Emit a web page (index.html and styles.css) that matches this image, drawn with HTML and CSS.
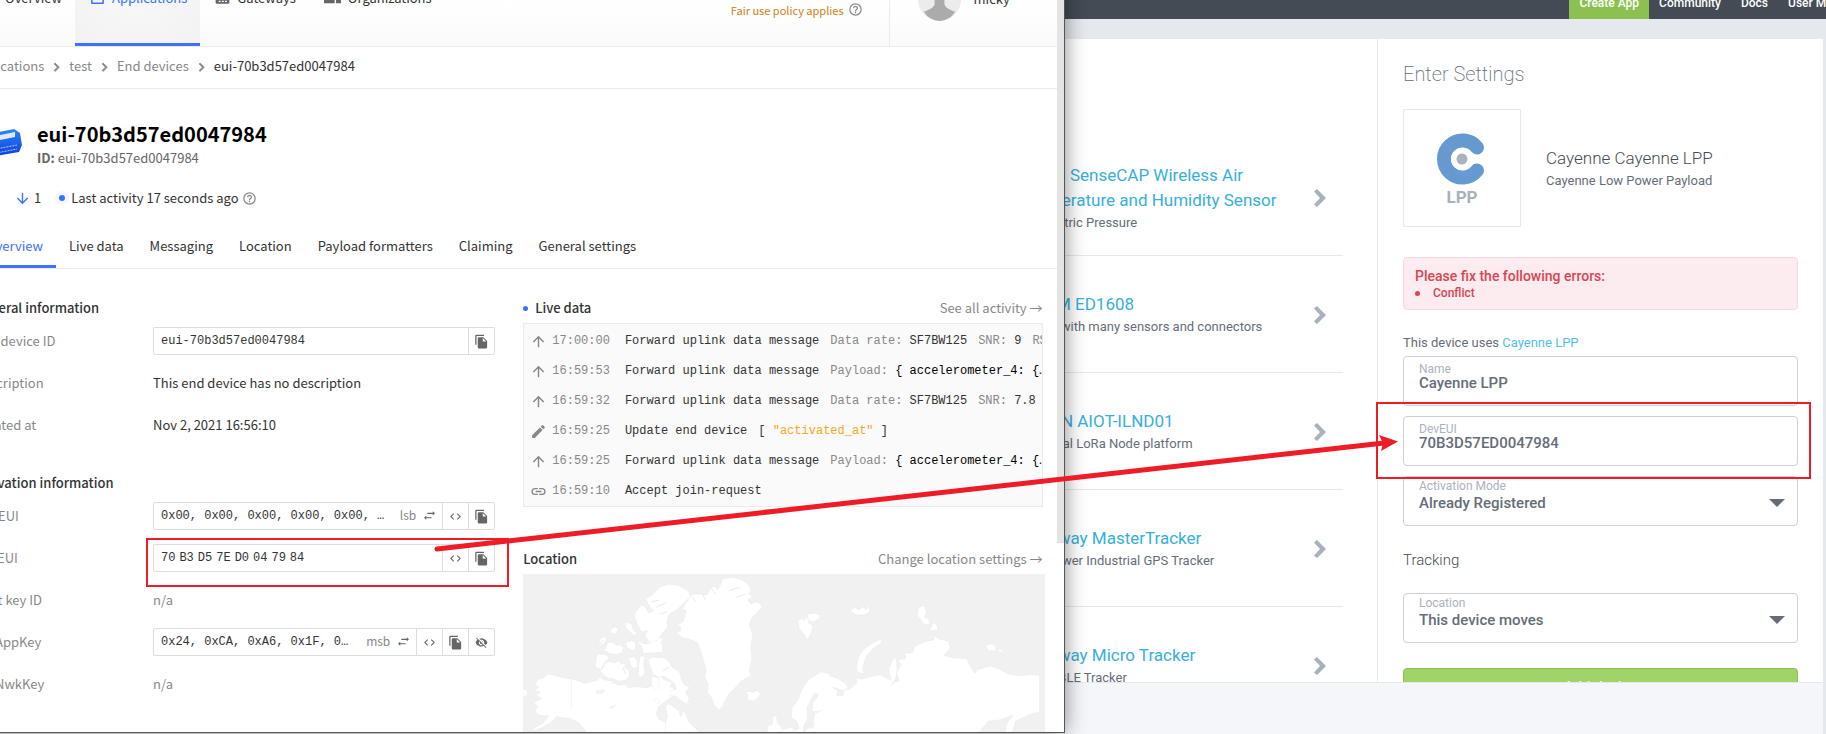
FILE: index.html
```html
<!DOCTYPE html>
<html lang="en">
<head>
<meta charset="utf-8">
<title>End device and Cayenne settings</title>
<link rel="stylesheet" href="styles.css">
</head>
<body>
<svg class="defs" aria-hidden="true">
  <symbol id="i-copy" viewBox="0 0 24 24"><path d="M16 1H4a2 2 0 0 0-2 2v14h2V3h12zM15 5l6 6v10a2 2 0 0 1-2 2H8a2 2 0 0 1-2-2V7c0-1.100.9-2 2-2zm-1 7h5.500L14 6.500z"/></symbol>
  <symbol id="i-code" viewBox="0 0 24 24"><path d="M9.400 16.600 4.800 12l4.600-4.600L8 6l-6 6 6 6zm5.200 0 4.600-4.600-4.600-4.600L16 6l6 6-6 6z"/></symbol>
  <symbol id="i-swap" viewBox="0 0 24 24"><path d="M22 8l-4-4v3H8v2h10v3zM2 16l4 4v-3h10v-2H6v-3z"/></symbol>
  <symbol id="i-up" viewBox="0 0 24 24"><path d="M4 12l1.400 1.400L11 7.800V20h2V7.800l5.600 5.600L20 12l-8-8z"/></symbol>
  <symbol id="i-down" viewBox="0 0 24 24"><path d="M20 12l-1.400-1.400L13 16.200V4h-2v12.200l-5.600-5.600L4 12l8 8z"/></symbol>
  <symbol id="i-edit" viewBox="0 0 24 24"><path d="M3 17.250V21h3.750L17.800 9.940l-3.750-3.750zM20.700 7.040a1 1 0 0 0 0-1.410l-2.340-2.340a1 1 0 0 0-1.410 0l-1.830 1.830 3.750 3.750z"/></symbol>
  <symbol id="i-link" viewBox="0 0 24 24"><path d="M3.900 12A3.100 3.100 0 0 1 7 8.900h4V7H7a5 5 0 0 0 0 10h4v-1.900H7A3.100 3.100 0 0 1 3.900 12zM8 13h8v-2H8zm9-6h-4v1.900h4a3.100 3.100 0 0 1 0 6.200h-4V17h4a5 5 0 0 0 0-10z"/></symbol>
  <symbol id="i-help" viewBox="0 0 24 24"><path d="M11 18h2v-2h-2zm1-16a10 10 0 1 0 0 20 10 10 0 0 0 0-20zm0 18a8 8 0 1 1 0-16 8 8 0 0 1 0 16zm0-14a4 4 0 0 0-4 4h2a2 2 0 1 1 4 0c0 2-3 1.750-3 5h2c0-2.250 3-2.500 3-5a4 4 0 0 0-4-4z"/></symbol>
  <symbol id="i-hide" viewBox="0 0 24 24"><path d="M12 7a5 5 0 0 1 4.640 6.830l2.920 2.920A11.800 11.800 0 0 0 22.990 12 11.830 11.830 0 0 0 8.010 4.950l2.160 2.160C10.740 7.130 11.350 7 12 7zM2 4.270l2.740 2.740A11.800 11.800 0 0 0 1 12a11.830 11.830 0 0 0 15.380 6.660L19.730 22 21 20.730 3.270 3zM7.530 9.800l1.550 1.550a3 3 0 0 0 3.570 3.570l1.550 1.550A5 5 0 0 1 7.530 9.800zm4.310-.78 3.150 3.150.02-.16a3 3 0 0 0-3-3z"/></symbol>
  <symbol id="i-chev" viewBox="0 0 24 24"><path d="M10 7 8.600 8.400l4.600 4.600-4.600 4.600L10 19l6-6z" stroke="currentColor"/></symbol>
  <symbol id="i-apps" viewBox="0 0 24 24"><path d="M3 3h18v18H3zM3 7h18" fill="none" stroke="currentColor" stroke-width="2.400" stroke-linejoin="round"/></symbol>
  <symbol id="i-gate" viewBox="0 0 24 24"><path fill-rule="evenodd" d="M3 2h18a2 2 0 0 1 2 2v16a2 2 0 0 1-2 2H3a2 2 0 0 1-2-2V4c0-1.100.9-2 2-2zm3 11v2h3v-2zm5 0v2h3v-2zm5 0v2h3v-2zM6 17v2h3v-2zm5 0v2h3v-2zm5 0v2h3v-2z"/></symbol>
  <symbol id="i-org" viewBox="0 0 24 24"><path d="M16 11a3 3 0 1 0 0-6 3 3 0 0 0 0 6zm-8 0a3 3 0 1 0 0-6 3 3 0 0 0 0 6zm0 2c-2.330 0-8 1.170-8 3.500V20h15v-3.500C15 14.170 10.330 13 8 13zm8 0-1 .05c1.160.84 2 1.970 2 3.450V20h7v-3.500C24 14.170 18.330 13 16 13z"/></symbol>
  <symbol id="i-next" viewBox="0 0 12 18"><path d="M3 0 12 9 3 18 0 15.500 6 9 0 2.500z"/></symbol>
</svg>

<main class="desktop">
  <section class="cayenne">
    <nav class="topbar">
      <a class="topbar-link create" href="#">Create App</a>
      <a class="topbar-link" href="#">Community</a>
      <a class="topbar-link" href="#">Docs</a>
      <a class="topbar-link" href="#">User Menu</a>
    </nav>
    <div class="sheet">
      <ul class="devices">
        <li class="device"><div><a class="device-name" href="#">Seeed SenseCAP Wireless Air<br>Temperature and Humidity Sensor</a><p class="device-note">Barometric Pressure</p></div><svg class="next"><use href="#i-next"/></svg></li>
        <li class="device"><div><a class="device-name" href="#">MCAM ED1608</a><p class="device-note">Device with many sensors and connectors</p></div><svg class="next"><use href="#i-next"/></svg></li>
        <li class="device"><div><a class="device-name" href="#">ASCEN AIOT-ILND01</a><p class="device-note">Industrial LoRa Node platform</p></div><svg class="next"><use href="#i-next"/></svg></li>
        <li class="device"><div><a class="device-name" href="#">Abeeway MasterTracker</a><p class="device-note">Low Power Industrial GPS Tracker</p></div><svg class="next"><use href="#i-next"/></svg></li>
        <li class="device"><div><a class="device-name" href="#">Abeeway Micro Tracker</a><p class="device-note">GPS &amp; BLE Tracker</p></div><svg class="next"><use href="#i-next"/></svg></li>
      </ul>
      <form class="settings">
        <h2 class="settings-title">Enter Settings</h2>
        <div class="product">
          <div class="product-logo">
            <svg class="lpp-mark" viewBox="0 0 52 52"><path d="M41 14.500A18.500 18.500 0 1 0 41 37.500" fill="none" stroke="#6699d0" stroke-width="14" stroke-linecap="round"/><circle cx="26" cy="26" r="11" fill="#fff"/><circle cx="26" cy="26" r="5.500" fill="#a9b1bd"/></svg>
            <span class="lpp-text">LPP</span>
          </div>
          <div>
            <h3 class="product-name">Cayenne Cayenne LPP</h3>
            <p class="product-note">Cayenne Low Power Payload</p>
          </div>
        </div>
        <div class="alert" role="alert">
          <strong class="alert-title">Please fix the following errors:</strong>
          <ul class="alert-list"><li class="alert-item">Conflict</li></ul>
        </div>
        <p class="uses">This device uses <a class="uses-link" href="#">Cayenne LPP</a></p>
        <div class="field"><label class="field-label" for="name">Name</label><input class="field-input" id="name" value="Cayenne LPP"></div>
        <div class="field"><label class="field-label" for="deveui">DevEUI</label><input class="field-input" id="deveui" value="70B3D57ED0047984"></div>
        <div class="field pick"><label class="field-label" for="mode">Activation Mode</label><select class="field-input" id="mode"><option>Already Registered</option></select></div>
        <h3 class="tracking">Tracking</h3>
        <div class="field pick"><label class="field-label" for="loc">Location</label><select class="field-input" id="loc"><option>This device moves</option></select></div>
        <button class="submit" type="button">Add device</button>
      </form>
    </div>
    <div class="base"></div>
  </section>

  <section class="console">
    <header class="head">
      <nav class="head-nav">
        <a class="head-link" href="#"><svg class="ic15"><use href="#i-apps"/></svg>Overview</a>
        <a class="head-link active" href="#"><svg class="ic15"><use href="#i-apps"/></svg>Applications</a>
        <a class="head-link" href="#"><svg class="ic15"><use href="#i-gate"/></svg>Gateways</a>
        <a class="head-link" href="#"><svg class="ic17"><use href="#i-org"/></svg>Organizations</a>
      </nav>
      <a class="fair" href="#">Fair use policy applies<svg class="ic15 grey"><use href="#i-help"/></svg></a>
      <button class="user" type="button">
        <svg class="avatar" viewBox="0 0 44 44"><circle cx="22" cy="22" r="22" fill="#ececec"/><path d="M17 18h10v8c0 4 5 6 11 8.500A20 20 0 0 1 22 44 20 20 0 0 1 6 34.500C12 32 17 30 17 26z" fill="#ababab"/></svg>
        <span>micky</span>
      </button>
    </header>
    <nav class="crumbs">
      <a href="#">Applications</a><svg class="ic17"><use href="#i-chev"/></svg><a href="#">test</a><svg class="ic17"><use href="#i-chev"/></svg><a href="#">End devices</a><svg class="ic17"><use href="#i-chev"/></svg><span class="here">eui-70b3d57ed0047984</span>
    </nav>
    <div class="title">
      <svg class="node-icon" viewBox="0 0 48 30"><defs><linearGradient id="node" x1="0" y1="0" x2="0" y2="1"><stop offset="0" stop-color="#2f86f5"/><stop offset="1" stop-color="#0a36dc"/></linearGradient></defs><path d="M0 9 40 1l6 4 2 12-3 7L4 31l-4-4z" fill="url(#node)"/><path d="M6 11l35-7v5L6 16z" fill="#d9ebff"/><path d="M6 24l37-7M7 28l36-7" stroke="#b5ccff" fill="none" stroke-dasharray="2 1"/></svg>
      <div>
        <h1 class="title-name">eui-70b3d57ed0047984</h1>
        <p class="title-id"><b>ID:</b> eui-70b3d57ed0047984</p>
      </div>
    </div>
    <div class="activity">
      <svg class="ic17 blue"><use href="#i-down"/></svg><span class="count">1</span><i class="pulse"></i><span>Last activity 17 seconds ago</span><svg class="ic15 grey"><use href="#i-help"/></svg>
    </div>
    <nav class="tabs">
      <a class="tab active" href="#">Overview</a><a class="tab" href="#">Live data</a><a class="tab" href="#">Messaging</a><a class="tab" href="#">Location</a><a class="tab" href="#">Payload formatters</a><a class="tab" href="#">Claiming</a><a class="tab" href="#">General settings</a>
    </nav>
    <div class="columns">
      <div class="info">
        <h2 class="section-title">General information</h2>
        <dl class="rows">
          <dt>End device ID</dt><dd><div class="box"><span class="box-text">eui-70b3d57ed0047984</span><button class="box-btn" type="button" aria-label="Copy"><svg class="ic15"><use href="#i-copy"/></svg></button></div></dd>
          <dt>Description</dt><dd>This end device has no description</dd>
          <dt>Created at</dt><dd>Nov 2, 2021 16:56:10</dd>
        </dl>
        <h2 class="section-title">Activation information</h2>
        <dl class="rows">
          <dt>AppEUI</dt><dd><div class="box"><span class="box-text">0x00, 0x00, 0x00, 0x00, 0x00, …</span><button class="order" type="button">lsb<svg class="ic13"><use href="#i-swap"/></svg></button><button class="box-btn" type="button" aria-label="Format"><svg class="ic13"><use href="#i-code"/></svg></button><button class="box-btn" type="button" aria-label="Copy"><svg class="ic15"><use href="#i-copy"/></svg></button></div></dd>
          <dt>DevEUI</dt><dd><div class="box"><span class="box-text bytes"><span>70</span><span>B3</span><span>D5</span><span>7E</span><span>D0</span><span>04</span><span>79</span><span>84</span></span><button class="box-btn" type="button" aria-label="Format"><svg class="ic13"><use href="#i-code"/></svg></button><button class="box-btn" type="button" aria-label="Copy"><svg class="ic15"><use href="#i-copy"/></svg></button></div></dd>
          <dt>Root key ID</dt><dd class="na">n/a</dd>
          <dt class="sub">AppKey</dt><dd><div class="box"><span class="box-text">0x24, 0xCA, 0xA6, 0x1F, 0…</span><button class="order" type="button">msb<svg class="ic13"><use href="#i-swap"/></svg></button><button class="box-btn" type="button" aria-label="Format"><svg class="ic13"><use href="#i-code"/></svg></button><button class="box-btn" type="button" aria-label="Copy"><svg class="ic15"><use href="#i-copy"/></svg></button><button class="box-btn" type="button" aria-label="Hide"><svg class="ic13"><use href="#i-hide"/></svg></button></div></dd>
          <dt class="sub">NwkKey</dt><dd class="na">n/a</dd>
        </dl>
      </div>
      <div class="side">
        <div class="side-head"><h2 class="side-title"><i class="dot"></i>Live data</h2><a href="#">See all activity →</a></div>
        <ol class="events">
          <li class="event"><svg class="ic17"><use href="#i-up"/></svg><time>17:00:00</time><span class="what">Forward uplink data message</span><span class="data"><s>Data rate:</s> SF7BW125</span><span class="data"><s>SNR:</s> 9</span><span class="data rest"><s>RSSI:</s></span></li>
          <li class="event"><svg class="ic17"><use href="#i-up"/></svg><time>16:59:53</time><span class="what">Forward uplink data message</span><span class="data rest"><s>Payload:</s> <b>{ accelerometer_4: {…</b></span></li>
          <li class="event"><svg class="ic17"><use href="#i-up"/></svg><time>16:59:32</time><span class="what">Forward uplink data message</span><span class="data"><s>Data rate:</s> SF7BW125</span><span class="data"><s>SNR:</s> 7.8</span></li>
          <li class="event"><svg class="ic17"><use href="#i-edit"/></svg><time>16:59:25</time><span class="what">Update end device</span><span class="data">[ <em>"activated_at"</em> ]</span></li>
          <li class="event"><svg class="ic17"><use href="#i-up"/></svg><time>16:59:25</time><span class="what">Forward uplink data message</span><span class="data rest"><s>Payload:</s> <b>{ accelerometer_4: {…</b></span></li>
          <li class="event"><svg class="ic17"><use href="#i-link"/></svg><time>16:59:10</time><span class="what">Accept join-request</span></li>
        </ol>
        <div class="side-head"><h2 class="side-title">Location</h2><a href="#">Change location settings →</a></div>
        <svg class="map" viewBox="0 0 1566 474">
          <g fill="#fff" stroke="#e9e9e9" stroke-width="1.500" stroke-linejoin="round">
            <path d="M0 345l12 3 2 12-8 10-6-2zM20 470l40-22 18-22-28-2-14-12 8-14-12-12 24-12-18-12 16-6-22-8 16-8-12-10 10-14 16-4 12-12 20 4 20 6 36 6 20 6 14 8 18-6 20-4 8-10 14 8 28 4 14 12 20-2 10 10 26-4 30 4 22-8 8-22 6-22 8 4 2 20 12 6 18 4-6 14 12 6-2 20-14 12-12 8-18 14-8 22 8 16 22 10 26 12 12 18v14H196l-8-18-18-24-28-14-24-2-16-4-24 22-34 18z"/>
            <path d="M428 480V446l6-20-6-28 10-8 16 10 14 10 6 18 10-20 8 22 8 16 14 14 14 14v6zM392 378l10-6 12 12-10 6z"/>
            <path d="M222 240l26 2 12 10-14 12-12 24-18-10 4-22zM262 262l14 6 10-8 8 10 14-2-2 14 14 8-2 20-12 10-20 2-16-8-18-2-12-12-10-12 12-6 2-14zM316 252l16-4 10 10 2 22-14 4-8-14zM352 246l16 2-6 16 4 34-12 14-8-10 2-30z"/>
            <path d="M376 260l14-12 16 4 16-2 16 12 12 20 20 12 6 22 8 16 18 8-14 14 12 20-8 18-18-12-14-12-16-4-4-12 20-6-4-16-18-14-12-8-20 2-16-10-6-20z"/>
            <path d="M386 308l20 4 4 26-12 10-12-14zM230 196l14-8 8 6-10 18-14 2zM254 206l14-2 12 10 10-2 12 8-4 16-18 6-18-2-20-12 8-6zM262 166l16-8 8 8-10 16-10-6zM306 144l20 6 6 18 12 12-14 4-12-14-10-8zM308 206l18-6 12 4v22l-10 4-16-10zM350 202l14 8 18-2-14-6 20-8-12-10 20 2 26 8-8 14 6 8-2 20-56 2-6-22-12-8z"/>
            <path d="M356 92l12 8 10 18 14-8-12-12-12-24 20-10 22-24 28-10 34 6 28 18 2 16-16 14-22 22-26 16-6 22 4 14-18 20-14 22-24 4-14-18 8-16-18 4-16-30-6-24z"/>
            <path d="M452 166l12-12 18-12 8-32-12-4 26-44 22-2 26 4 12-24 14-2 6 10 10-18 6-16 28-4 26 6 22 14 10 18-8 12 12 8-14 10 8 12 18-6 18 12-20 24-12 10-8 22 10 30-6 36 4 40-8 28 4 20-30 16-20 24-14 12-12 20-10 24-10 6-14-14-6-20-14-18 2-24-10-22 4-20-12-46-14-38-24-10-20-4-20-16 14-6-2-12-16-2z"/>
            <path d="M670 356l10-4 10 4 12-6 12 8-6 14-18 10-18-6 4-10zM752 424l10 4 2 18 14 16 8 14h-54l4-20 12-4z"/>
            <path d="M826 140l12-8 6 8 6-12 10 8-2 12 12 6-2 20-14 24-14-22-10-12zM856 120l22-2 16 6-4 12-22 8-14-8zM982 110l16-10 10 8 14-10 8 10 14-16-4 24-20 8-22-2z"/>
            <path d="M1008 248l16-22 26-18 24-12 6 8-24 16-22 24-10 24-4 20 6 12-20-4-4-16zM1188 102l16-8 8 18-6 16 14 10 2 14-20-2-8-16-10-8zM1234 144l12 14-2 10-24 4 6-12zM1390 214l18-4 14 8-4 14-20-2zM1430 224l14 6-4 6-12-4zM1402 254l14 6-10 2z"/>
            <path d="M784 480l4-10 20-10 10 12 12-8-8-22-16-12 2-28 18-24 12-32 20-28 18-12 18-12 22 4 10 10 20 6 22 14 8 14-14 10-16-8-16-4 16 12-4 14 20-2 2-16 18-2 22-20-4-14 18 4 24-8 30-6 20 10 14 8-8-34 16-36 8 8 2 30-4 24-14 22 12-10 12-2-8-26 14-24-10-14 24-4-4-16 24-2 6-18 34-16 24-4-2-14 20 12 26 6 6 20-20 22 30 8 38 2 12 24 14 20 6-10 40-12 28 10 24 14 40 6 30-4 26 4v110l-20 2-22 10-30 14-6 24-14 18-12-4 4-28 20-28-38 14-36 4-30 36 4 16z"/>
            <path d="M782 466l30-6-4 20h-30z"/>
          </g>
          <g fill="#f1f1f1"><path d="M874 356l14 4-2 10-14 16-2 24 12 2 20-4-14 8-10 2-4 20 2 22-20 6-16 14 2-24 12-22-2-32zM218 350l30-4-8 12-18 4zM258 402l24-12-12 14zM264 324l50-2 30 6-10 6-64-4z"/></g>
          <path d="M400 100l30-14M386 84l24-6M410 120l24-6M520 84l-14-18M548 80l-8-20M580 62l-16-22M620 50l30-10M640 70l30-10M300 280l8 20M420 290l20-10M232 210l10-12" stroke="#eaeaea" stroke-width="3"/>
          <path d="M145 306v100" stroke="#eee" stroke-width="2"/>
        </svg>
      </div>
    </div>
    <i class="scroll"></i>
  </section>

  <svg class="marks" aria-hidden="true">
    <g fill="none" stroke="#ee1c24"><rect x="147" y="539" width="361" height="47" stroke-width="2"/><rect x="1377" y="403" width="433" height="75" stroke-width="2"/><path d="M437 549 1384 443" stroke-width="5" stroke-linecap="round"/></g>
    <path d="M1398 441.500 1379 435l4 8-2 8z" fill="#ee1c24"/>
  </svg>
</main>
</body>
</html>
```

FILE: styles.css
```css
* { box-sizing: border-box; }
body { margin: 0; }
h1, h2, h3, p, ul, ol, dl, dd { margin: 0; padding: 0; font-size: inherit; font-weight: 400; }
ul, ol { list-style: none; }
a { color: inherit; text-decoration: none; }
button { border: 0; padding: 0; background: none; font: inherit; color: inherit; }
svg { fill: currentColor; flex: none; }
i, em, s { font-style: normal; text-decoration: none; }
.defs { position: absolute; width: 0; height: 0; }
.ic13 { width: 13px; height: 13px; }
.ic15 { width: 15px; height: 15px; }
.ic17 { width: 17px; height: 17px; }
.grey { color: #888; }
.blue { color: #3c72ff; }

.desktop { position: relative; height: 100vh; overflow: hidden; }

/* Cayenne page */
.cayenne {
  height: 100%;
  display: grid;
  grid-template-rows: 19px 1fr 51px;
  background: #e5e8ec;
  padding-right: 3px;
  font-family: Roboto, sans-serif;
  color: #666d78;
}
.topbar {
  display: flex;
  justify-content: flex-end;
  align-items: flex-end;
  margin-right: -33px;
  background: #444b54;
  color: #fff;
  font-size: 12px;
  font-weight: 500;
  overflow: hidden;
}
.topbar-link { padding: 6px 10px 8px; height: 30px; line-height: 16px; }
.create { background: #8cc152; }
.sheet {
  display: grid;
  grid-template-columns: 1fr 446px;
  margin-top: 20px;
  background: #fff;
  border-bottom: 1px solid #e5e8ec;
  overflow: hidden;
  min-height: 0;
}
.base { background: #f4f6fa; }
.devices { width: 358px; margin-left: auto; padding: 100px 34px 0 0; }
.device {
  display: flex;
  align-items: center;
  justify-content: space-between;
  height: 117px;
  padding: 1px 17px 0 0;
  border-bottom: 1px solid #e5e8ec;
}
.device-name { display: block; font-size: 17px; line-height: 25px; color: #37afdb; white-space: nowrap; }
.device-note { font-size: 13px; line-height: 20px; white-space: nowrap; }
.next { width: 12px; height: 18px; color: #a9b1bd; }

.settings { padding: 20px 25px 0; border-left: 1px solid #e5e8ec; }
.settings-title { font-size: 20px; line-height: 30px; font-weight: 200; }
.product { display: flex; align-items: center; gap: 25px; margin-top: 20px; }
.product-logo {
  display: flex;
  flex-direction: column;
  align-items: center;
  justify-content: center;
  width: 118px;
  height: 118px;
  padding-top: 5px;
  border: 1px solid #e5e8ec;
}
.lpp-mark { width: 52px; height: 52px; }
.lpp-text { font-size: 17px; line-height: 24px; font-weight: 700; color: #a9b1bd; }
.product-name { font-size: 17px; line-height: 26px; font-weight: 300; color: #444b54; }
.product-note { font-size: 13px; line-height: 20px; }
.alert {
  margin-top: 30px;
  padding: 8px 11px;
  border: 1px solid #f8d7dd;
  border-radius: 4px;
  background: #fcecef;
  color: #da4453;
}
.alert-title { display: block; font-size: 14px; line-height: 20px; font-weight: 500; }
.alert-item { display: flex; align-items: center; gap: 13px; font-size: 12px; line-height: 15px; font-weight: 500; }
.alert-item::before { content: ""; width: 5px; height: 5px; border-radius: 50%; background: #da4453; }
.uses { margin: 22px 0 3px; font-size: 13px; line-height: 21px; }
.uses-link { color: #4fc1e9; }
.field {
  position: relative;
  height: 50px;
  margin-bottom: 10px;
  border: 1px solid #ccd1d9;
  border-radius: 4px;
  color: #656d78;
}
.field-label { position: absolute; left: 15px; top: 5px; font-size: 12px; line-height: 15px; color: #aab2bd; }
.field-input {
  width: 100%;
  height: 100%;
  padding: 6px 15px 2px;
  border: 0;
  background: none;
  appearance: none;
  font: 500 15px Roboto, sans-serif;
  color: inherit;
}
.pick .field-label { top: 2px; }
.pick::after {
  content: "";
  position: absolute;
  right: 12px;
  top: 22px;
  border: 8px solid transparent;
  border-top-color: #656d78;
  border-bottom: 0;
}
.tracking { margin: 22px 0 20px; font-size: 15px; line-height: 25px; font-weight: 300; color: #444b54; }
.submit {
  width: 100%;
  height: 38px;
  margin-top: 15px;
  border: 1px solid #8cc152;
  border-radius: 4px;
  background: #a0d468;
  color: #fff;
  font-size: 15px;
}

/* Network console window */
.console {
  position: absolute;
  left: -60px;
  top: -48px;
  right: 41.7%;
  bottom: 1px;
  border-right: 1px solid #555;
  border-bottom: 1px solid #555;
  background: #fff;
  box-shadow: 0 0 20px rgba(0, 0, 0, .45);
  overflow: hidden;
  font-family: "Noto Sans CJK SC", sans-serif;
  font-size: 13px;
  line-height: 20px;
  color: #333;
  white-space: nowrap;
}
.head {
  display: flex;
  height: 95px;
  margin-right: 7px;
  padding-left: 28px;
  border-bottom: 1px solid #ebebeb;
  background: linear-gradient(#fff 50%, #fafafa);
}
.head-nav { display: flex; margin-right: auto; }
.head-link { display: flex; align-items: center; gap: 7px; padding: 0 13px 0 15px; border-bottom: 3px solid transparent; }
.head-link svg { color: #666; }
.head-link.active { border-color: #3c72ff; background: radial-gradient(#f8f8f8, #f2f2f2); color: #3c72ff; }
.head-link.active svg { color: inherit; }
.fair { display: flex; align-items: center; gap: 4px; margin-right: 26px; padding-top: 21px; font-size: 11px; color: #d0800f; }
.user { display: flex; align-items: center; gap: 13px; width: 168px; padding-left: 28px; border-left: 1px solid #ebebeb; }
.avatar { width: 43px; height: 43px; }
.crumbs { display: flex; align-items: center; gap: 4px; height: 42px; margin-right: 7px; padding: 0 0 3px 29px; border-bottom: 1px solid #ebebeb; color: #888; }
.crumbs .here { color: #333; }
.title { display: flex; align-items: center; gap: 15px; margin-top: 30px; padding-left: 34px; }
.node-icon { width: 48px; height: 30px; }
.title-name { font-size: 20px; line-height: 30px; font-weight: 700; color: #000; }
.title-id { color: #666; line-height: 18px; }
.activity { display: flex; align-items: center; gap: 3px; margin-top: 21px; padding-left: 74px; }
.pulse { width: 6px; height: 6px; margin: 0 3px 0 15px; border-radius: 50%; background: #3c72ff; box-shadow: 0 0 0 4px #f5f8ff; }
.tabs { display: flex; height: 46px; margin: 15px 7px 0 0; padding-left: 33px; border-bottom: 1px solid #ebebeb; }
.tab { padding: 13px 13px 0; border-bottom: 3px solid transparent; }
.tab.active { color: #3c72ff; border-color: #3c72ff; }
.columns { display: grid; grid-template-columns: 1fr 1fr; gap: 28px; margin-right: 7px; padding: 29px 12px 0 34px; }
.columns > * { min-width: 0; }
.section-title { font-weight: 500; line-height: 20px; }
.rows { display: grid; grid-template-columns: 179px 1fr; grid-auto-rows: 42px; align-items: center; margin: 2px 0 27px; }
.rows dt, .na { color: #888; }
.rows .sub { padding-left: 21px; }
.rows dd { min-width: 0; }
.box { display: flex; height: 28px; border: 1px solid #ddd; border-radius: 2px; color: #666; }
.box-text {
  flex: 1;
  padding: 0 7px;
  overflow: hidden;
  text-overflow: ellipsis;
  font: 12px/26px "Liberation Mono", monospace;
  color: #333;
}
.bytes { display: flex; gap: 4px; }
.box-btn { display: flex; align-items: center; justify-content: center; width: 26px; border-left: 1px solid #ddd; }
.order { display: flex; align-items: center; gap: 7px; padding: 0 6px 2px 5px; font-size: 12px; color: #888; }
.order svg { color: #666; }
.side-head { display: flex; justify-content: space-between; margin-right: 2px; color: #888; }
.side-title { display: flex; align-items: center; gap: 7px; font-weight: 500; color: #333; }
.dot { width: 5px; height: 5px; border-radius: 50%; background: #3c72ff; }
.events { margin: 5px 2px 42px 0; padding: 2px 0 0; border: 1px solid #ebebeb; background: #fafafa; font: 12px/30px "Liberation Mono", monospace; overflow: hidden; }
.event { display: flex; align-items: center; height: 30px; padding-left: 6px; color: #888; }
.event time { margin: 0 15px 0 5px; }
.event .what, .data { color: #333; }
.data { margin-left: 11px; }
.data s { color: #888; }
.data b { font-weight: 400; color: #000; }
.data em { color: #f5a623; }
.rest { flex: 1; min-width: 0; overflow: hidden; }
.map { display: block; width: 100%; height: auto; margin-top: 5px; background: #f1f1f1; }
.scroll { position: absolute; right: 0; top: 0; width: 7px; height: 591px; background: #e4e4e4; }

.marks { position: absolute; left: 0; top: 0; width: 100%; height: 100%; pointer-events: none; }
```
